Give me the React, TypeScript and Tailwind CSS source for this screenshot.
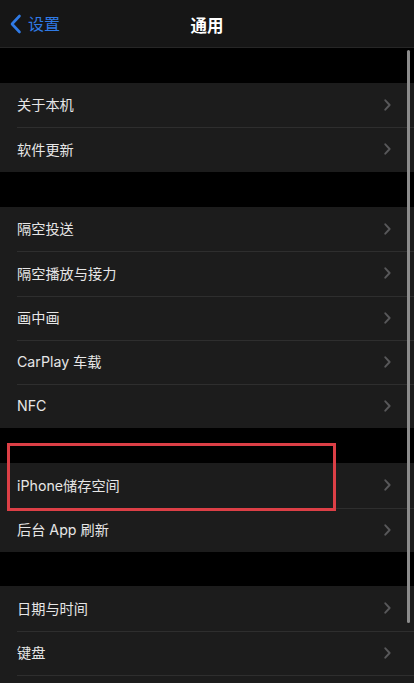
import React from "react";

const font = { fontFamily: 'Inter, "Noto Sans CJK SC", "Noto Sans", sans-serif' };

function Chevron() {
  return (
    <svg width="7" height="12" viewBox="0 0 7 12" className="shrink-0">
      <path d="M1.3 1.3 L5.6 6 L1.3 10.7" fill="none" stroke="#58585a" strokeWidth="1.9" strokeLinecap="round" strokeLinejoin="round" />
    </svg>
  );
}

function Row({ label, first }: { label: string; first?: boolean }) {
  return (
    <div className="relative flex h-[44.25px] items-center justify-between bg-[#1c1c1c] pl-[17px] pr-[23px]">
      {!first && <div className="absolute left-[17px] right-0 top-0 h-px bg-[#2e2e2e]" />}
      <span className="text-[14.2px] text-[#e6e6e6]">{label}</span>
      {label && <Chevron />}
    </div>
  );
}

function Group({ items }: { items: string[] }) {
  return (
    <div className="flex flex-col">
      {items.map((t, i) => (
        <Row key={t + i} label={t} first={i === 0} />
      ))}
    </div>
  );
}

export default function App() {
  return (
    <div className="relative h-[683px] w-[414px] overflow-hidden bg-black" style={font}>
      <div className="flex h-[48px] items-center justify-between border-b border-[#262626] bg-[#161616] px-[9px]">
        <div className="flex items-center gap-[6px]">
          <svg width="13" height="20" viewBox="0 0 13 20">
            <path d="M10.5 2 L3 10 L10.5 18" fill="none" stroke="#2f7ae5" strokeWidth="2.6" strokeLinecap="round" strokeLinejoin="round" />
          </svg>
          <span className="text-[16px] text-[#2f7ae5]">设置</span>
        </div>
        <span className="absolute left-1/2 top-[14px] -translate-x-1/2 text-[16.5px] font-semibold text-white">通用</span>
        <div />
      </div>
      <div className="h-[35px]" />
      <Group items={["关于本机", "软件更新"]} />
      <div className="h-[35.5px]" />
      <Group items={["隔空投送", "隔空播放与接力", "画中画", "CarPlay 车载", "NFC"]} />
      <div className="h-[35px]" />
      <Group items={["iPhone储存空间", "后台 App 刷新"]} />
      <div className="h-[34.5px]" />
      <Group items={["日期与时间", "键盘", ""]} />

      <div className="absolute left-[7px] top-[443px] h-[68px] w-[329px] border-[3px] border-[#dc3f46]" />
      <div className="absolute left-[407px] top-[50px] h-[573px] w-[3px] rounded-full bg-[#8c8c8c]" />
    </div>
  );
}
